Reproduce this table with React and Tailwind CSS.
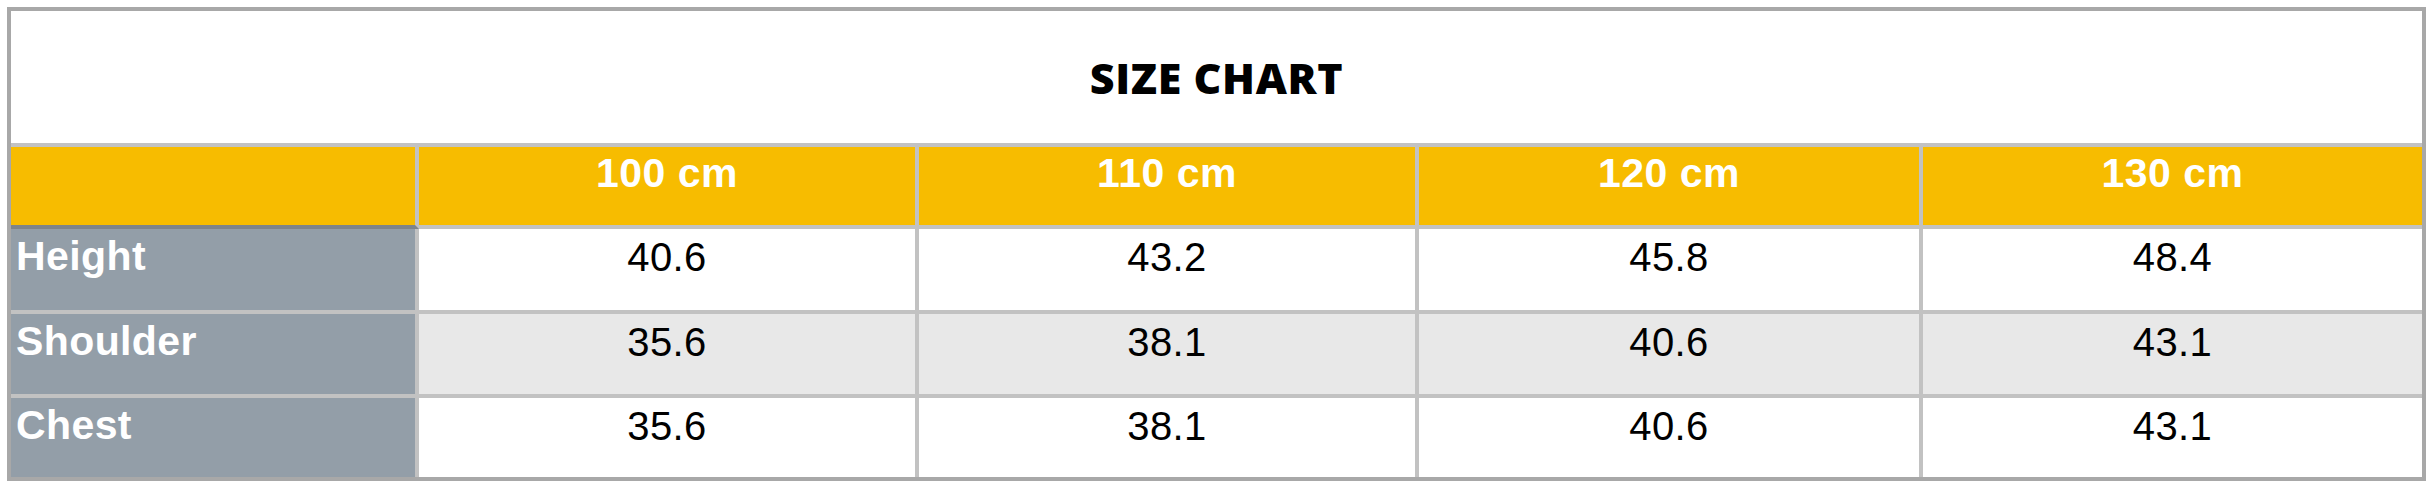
// Size chart table: title bar, yellow size header, grey label column

const sizes = ['100 cm', '110 cm', '120 cm', '130 cm']

const rows = [
  { label: 'Height', values: ['40.6', '43.2', '45.8', '48.4'], bg: 'bg-white', h: 'h-[85px]' },
  { label: 'Shoulder', values: ['35.6', '38.1', '40.6', '43.1'], bg: 'bg-[#e8e8e8]', h: 'h-[84px]' },
  { label: 'Chest', values: ['35.6', '38.1', '40.6', '43.1'], bg: 'bg-white', h: 'h-[79px]' },
]

const colWidths = ['w-[500px]', 'w-[500px]', 'w-[504px]', 'w-[499px]']

export default function App() {
  return (
    <div className="w-[2434px] h-[488px] bg-white pt-[7px] pl-[7px]">
      <div
        className="w-[2419px] border-4 border-[#a8a8a8] bg-white"
        style={{ fontFamily: '"Liberation Sans", Arial, sans-serif' }}
      >
        {/* Title */}
        <div className="h-[136px] border-b-4 border-[#c2c2c2] flex items-center justify-center">
          <h1
            className="text-[43px] leading-none font-extrabold text-black tracking-[0.6px]"
            style={{ fontFamily: '"Open Sans", sans-serif' }}
          >
            SIZE CHART
          </h1>
        </div>

        {/* Header row */}
        <div className="flex h-[82px]">
          <div className="w-[408px] bg-[#f7bc00] border-r-4 border-b-4 border-r-[#c2c2c2] border-b-[#7d848a]" />
          {sizes.map((s, i) => (
            <div
              key={s}
              className={`${colWidths[i]} bg-[#f7bc00] border-b-4 border-[#c2c2c2] ${i < 3 ? 'border-r-4' : ''} text-center text-white font-bold text-[41px] leading-[46px] tracking-[0.5px] pt-[3px]`}
            >
              {s}
            </div>
          ))}
        </div>

        {/* Body rows */}
        {rows.map((row, r) => (
          <div key={row.label} className={`flex ${row.h}`}>
            <div
              className={`w-[408px] bg-[#939ea8] border-r-4 border-[#c2c2c2] ${r < 2 ? 'border-b-4' : ''} text-white font-bold text-[41px] leading-[46px] tracking-[0.4px] pt-[4px] pl-[5px]`}
            >
              {row.label}
            </div>
            {row.values.map((v, i) => (
              <div
                key={i}
                className={`${colWidths[i]} ${row.bg} border-[#c2c2c2] ${i < 3 ? 'border-r-4' : ''} ${r < 2 ? 'border-b-4' : ''} text-center text-black text-[40px] leading-[46px] tracking-[0.4px] pt-[5px]`}
              >
                {v}
              </div>
            ))}
          </div>
        ))}
      </div>
    </div>
  )
}
